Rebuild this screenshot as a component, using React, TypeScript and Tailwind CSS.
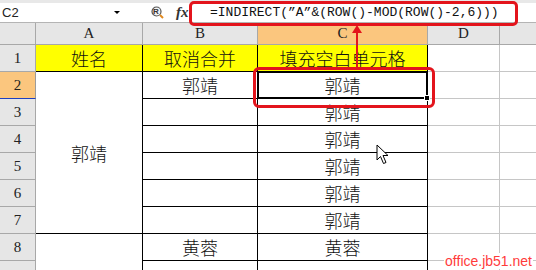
import React from "react";

const cjk = "font-['Noto_Sans_CJK_SC',sans-serif]";
const serif = "font-['Liberation_Serif','Times_New_Roman',serif]";

const RowHead = ({ n, active = false }: { n?: number; active?: boolean }) => (
  <div
    className={`flex items-center justify-center border-r border-b text-[15px] text-[#222] ${serif} ${
      active ? "bg-[#fbc67e] border-r-[#9c9c9c] border-b-[#1f3fbf]" : "bg-[#e6e6e6] border-[#a8a8a8]"
    }`}
  >
    {n}
  </div>
);

const ColHead = ({ label, active = false }: { label: string; active?: boolean }) => (
  <div
    className={`flex items-center justify-center border-r border-b border-[#a8a8a8] text-[15px] text-[#222] ${serif} ${
      active ? "bg-[#fbc67e]" : "bg-[#e6e6e6]"
    }`}
  >
    {label}
  </div>
);

const Cell = ({ text, yellow = false }: { text?: string; yellow?: boolean }) => (
  <div
    className={`flex items-center justify-center border-r border-b border-black text-[18px] font-light leading-none text-[#111] ${cjk} ${
      yellow ? "bg-[#ffff00]" : "bg-white"
    }`}
  >
    {text}
  </div>
);

const Grid = () => <div className="border-r border-b border-[#c6c6c6] bg-white" />;
const Edge = () => <div className="border-b border-[#c6c6c6] bg-white" />;

export default function App() {
  return (
    <div className="relative w-[536px] h-[270px] overflow-hidden bg-white">
      {/* formula bar */}
      <div className="h-[23px] flex flex-col border-b border-[#b4b4b4]">
        <div className="h-[4px] bg-[#e8e8e8]" />
        <div className="flex-1 flex items-center">
          <div className="w-[123px] h-full flex items-center justify-between pl-[2px] pr-[3px]">
            <span className="font-['Liberation_Sans',sans-serif] text-[13px] text-[#222]">C2</span>
            <span className="w-0 h-0 border-l-[3px] border-r-[3px] border-t-[3px] border-l-transparent border-r-transparent border-t-black" />
          </div>
          <div className="w-[66px] h-full flex items-center pl-[28px] gap-[12px]">
            <div className="relative w-[13px] h-[13px]">
              <svg viewBox="0 0 13 13" className="w-[13px] h-[13px]">
                <circle cx="5.5" cy="5.5" r="4.5" fill="#f4f4f4" stroke="#555" strokeWidth="1.2" />
                <line x1="9" y1="9" x2="12" y2="12" stroke="#e08a20" strokeWidth="2" />
              </svg>
              <span className="absolute left-[2px] top-[0px] text-[8px] font-bold leading-[11px] text-[#333] font-['Liberation_Sans',sans-serif]">R</span>
            </div>
            <span className={`${serif} italic font-bold text-[15px] leading-none text-[#333]`}>fx</span>
          </div>
          <div className="flex-1 h-full flex items-center pl-[21px] font-['Liberation_Mono',monospace] text-[13px] text-[#111] whitespace-nowrap">
            =INDIRECT(”A”&amp;(ROW()-MOD(ROW()-2,6)))
          </div>
        </div>
      </div>

      {/* sheet */}
      <div className="grid grid-cols-[36px_107px_115px_170px_72px_36px] grid-rows-[22px_repeat(8,27px)_20px]">
        <div className="bg-[#e6e6e6] border-r border-b border-[#a8a8a8]" />
        <ColHead label="A" />
        <ColHead label="B" />
        <ColHead label="C" active />
        <ColHead label="D" />
        <div className="bg-[#e6e6e6] border-b border-[#a8a8a8]" />

        <RowHead n={1} />
        <Cell text="姓名" yellow />
        <Cell text="取消合并" yellow />
        <Cell text="填充空白单元格" yellow />
        <Grid />
        <Edge />

        <RowHead n={2} active />
        <div className={`row-span-6 flex items-center justify-center border-r border-b border-black text-[18px] font-light leading-none text-[#111] ${cjk}`}>
          郭靖
        </div>
        <Cell text="郭靖" />
        <div className={`relative flex items-center justify-center border-r border-b border-black border-t border-t-[#1f3fbf] -mt-px text-[18px] font-light leading-none text-[#111] ${cjk}`}>
          郭靖
          <div className="absolute inset-[-1px] border-2 border-black">
            <div className="absolute inset-0 border border-white" />
          </div>
          <div className="absolute right-[-3px] bottom-[-3px] w-[6px] h-[6px] bg-black border border-white" />
        </div>
        <Grid />
        <Edge />

        {[3, 4, 5, 6, 7].map((n) => (
          <React.Fragment key={n}>
            <RowHead n={n} />
            <Cell />
            <Cell text="郭靖" />
            <Grid />
            <Edge />
          </React.Fragment>
        ))}

        <RowHead n={8} />
        <div className="row-span-2 border-r border-black bg-white" />
        <Cell text="黄蓉" />
        <Cell text="黄蓉" />
        <Grid />
        <Edge />

        <RowHead />
        <Cell />
        <Cell />
        <Grid />
        <Edge />
      </div>

      {/* annotations */}
      <div className="absolute left-[189px] top-[1px] w-[329px] h-[25px] border-[3px] border-[#e3141c] rounded-[5px]" />
      <div className="absolute left-[253px] top-[67px] w-[182px] h-[41px] border-[3px] border-[#e3141c] rounded-[6px]" />
      <svg className="absolute left-[350px] top-[24px]" width="14" height="45" viewBox="0 0 14 45">
        <line x1="7" y1="6" x2="7" y2="45" stroke="#e3141c" strokeWidth="2" />
        <polygon points="7,1 2,9 12,9" fill="#e3141c" />
      </svg>
      <svg className="absolute left-[376px] top-[144px]" width="14" height="22" viewBox="0 0 14 22">
        <path d="M1 1 L1 16 L4.5 12.5 L7.5 19.5 L10 18.5 L7 11.5 L12 11.5 Z" fill="white" stroke="black" strokeWidth="1" strokeLinejoin="round" />
      </svg>
      <div className="absolute right-[3px] bottom-[1px] px-[1px] bg-white font-['Liberation_Sans',sans-serif] text-[14px] leading-[16px] text-[#ff3b3b]">
        office.jb51.net
      </div>
    </div>
  );
}
